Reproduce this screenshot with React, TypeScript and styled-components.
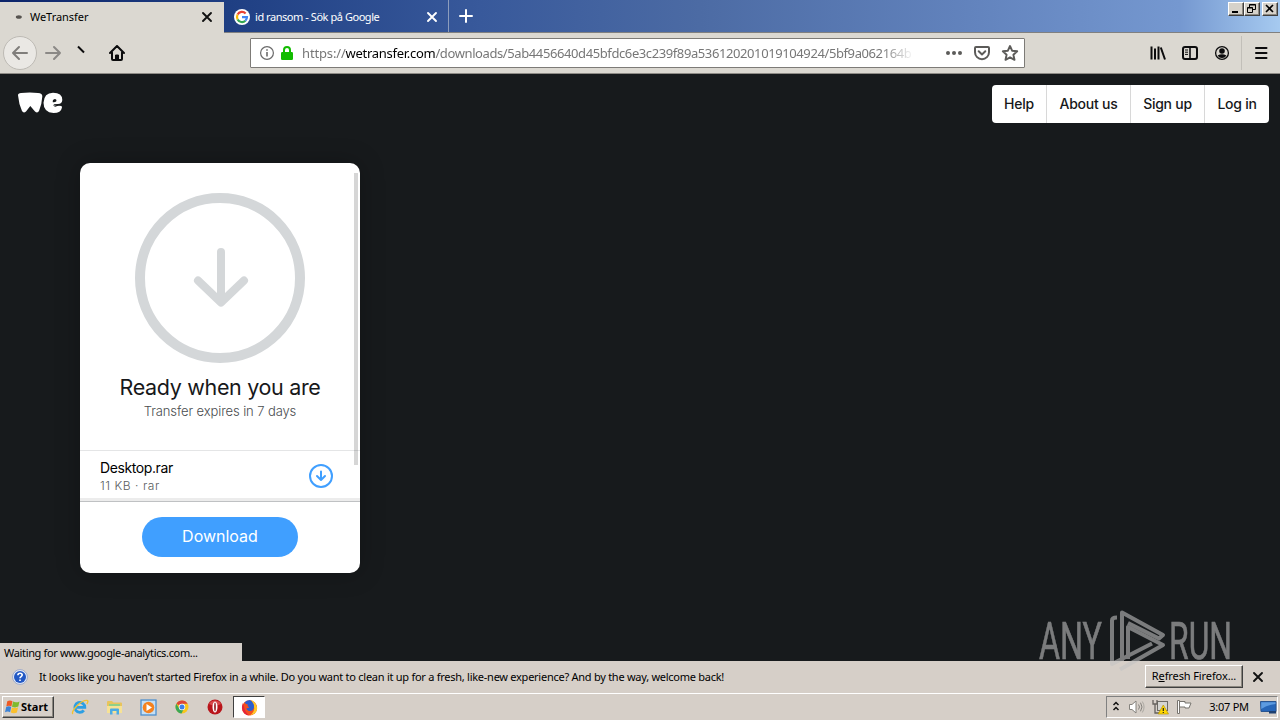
import React from 'react'

import styled, { createGlobalStyle } from 'styled-components'

const GlobalStyle = createGlobalStyle`
  * {
    box-sizing: border-box;
  }

  body {
    margin: 0;
    overflow: hidden;
    background: #171a1c;
    font-family: 'Noto Sans', 'Open Sans', sans-serif;
    color: #000;
  }

  svg {
    display: block;
    flex: none;
  }
`

const Screen = styled.div`
  position: relative;
  display: flex;
  flex-direction: column;
  width: 1280px;
  height: 720px;
  overflow: hidden;
`

/* ---------- browser chrome ---------- */

const TitleBar = styled.div`
  display: flex;
  flex: none;
  height: 33px;
  background: linear-gradient(
    90deg,
    #0c246a 0,
    #1f3f83 230px,
    #38599b 480px,
    #4c6ba4 700px,
    #6384be 980px,
    #7598d0 1180px,
    #a6caf0 1280px
  );
  border-bottom: 1px solid #808080;
`

const Tab = styled.div<{ $active?: boolean }>`
  display: flex;
  align-items: center;
  width: ${({ $active }) => ($active ? 224 : 225)}px;
  height: ${({ $active }) => ($active ? 31 : 32)}px;
  margin-top: ${({ $active }) => ($active ? 2 : 0)}px;
  padding: ${({ $active }) => ($active ? '0 10px 2px 11px' : '1px 9px 0 10px')};
  background: ${({ $active }) => ($active ? '#dbd8d1' : 'transparent')};
  border-right: ${({ $active }) => ($active ? 'none' : '1px solid #8d9dbd')};
  color: ${({ $active }) => ($active ? '#000' : '#fff')};
`

const TabLabel = styled.span<{ $gap: number; $spacing: string }>`
  flex: 1;
  margin-left: ${({ $gap }) => $gap}px;
  font-size: 11px;
  letter-spacing: ${({ $spacing }) => $spacing};
  white-space: nowrap;
`

const NewTab = styled.div`
  display: flex;
  align-items: center;
  margin-left: 9px;
`

const WindowControls = styled.div`
  display: flex;
  margin: 2px 2px 0 auto;
`

const WindowButton = styled.div<{ $spaced?: boolean }>`
  display: flex;
  width: 16px;
  height: 14px;
  margin-left: ${({ $spaced }) => ($spaced ? 2 : 0)}px;
  background: #d6d2ca;
  border: 1px solid;
  border-color: #fff #404040 #404040 #fff;
  box-shadow: inset -1px -1px 0 #8c8880;
`

const Toolbar = styled.div`
  display: flex;
  flex: none;
  align-items: center;
  height: 41px;
  padding: 0 11px 1px 3px;
  background: #dbd8d1;
  border-bottom: 1px solid #8e8b86;
`

const BackButton = styled.div`
  display: flex;
  align-items: center;
  justify-content: center;
  width: 34px;
  height: 34px;
  background: #eae8e4;
  border: 1px solid #bdbab4;
  border-radius: 50%;
`

const NavIcons = styled.div`
  display: flex;
  align-items: center;
  gap: 14px;
  margin-left: 7px;
`

const AddressBar = styled.div`
  display: flex;
  align-items: center;
  width: 775px;
  height: 30px;
  margin-left: 125px;
  padding: 0 5px 0 8px;
  background: #fff;
  border: 1px solid #7d7b77;
  border-radius: 1px;
`

const Identity = styled.div`
  display: flex;
  align-items: center;
  gap: 5px;
`

const Url = styled.div`
  flex: 1;
  margin-left: 8px;
  font-size: 13px;
  line-height: 26px;
  letter-spacing: -0.4px;
  color: #777;
  white-space: nowrap;
  mask-image: linear-gradient(90deg, #000 580px, transparent 612px);
`

const Scheme = styled.span`
  letter-spacing: -0.15px;
`

const Host = styled.span`
  color: #000;
  letter-spacing: -0.28px;
`

const AddressActions = styled.div`
  display: flex;
  align-items: center;
  gap: 10px;
  margin-left: 34px;
`

const ToolbarActions = styled.div`
  display: flex;
  align-items: center;
  gap: 16px;
  margin-left: auto;
`

const MenuCell = styled.div`
  display: flex;
  align-items: center;
  height: 34px;
  margin-left: -5px;
  padding-left: 11px;
  border-left: 1px solid #c2bfb9;
`

/* ---------- page ---------- */

const Page = styled.main`
  display: flex;
  flex: 1;
  flex-direction: column;
  min-height: 0;
  background: #171a1c;
  font-family: Inter, 'Liberation Sans', sans-serif;
`

const PageHeader = styled.header`
  display: flex;
  flex: none;
  justify-content: space-between;
  height: 49px;
  padding: 11px 11px 0 18px;
`

const Logo = styled.svg`
  margin-top: 7px;
`

const PageNav = styled.nav`
  display: flex;
  height: 38px;
  background: #fff;
  border-radius: 4px;
`

const NavItem = styled.a<{ $width: number }>`
  width: ${({ $width }) => $width}px;
  font-size: 14px;
  font-weight: 500;
  line-height: 38px;
  letter-spacing: -0.25px;
  text-align: center;
  color: #17181a;

  & + & {
    border-left: 1px solid #d8d8d8;
  }
`

const Card = styled.section`
  display: flex;
  flex: none;
  flex-direction: column;
  position: relative;
  width: 280px;
  height: 410px;
  margin: 40px 0 0 80px;
  overflow: hidden;
  background: #fff;
  border-radius: 10px;
  box-shadow: 0 0 24px rgba(0, 0, 0, 0.25);
`

const Hero = styled.div`
  display: flex;
  flex-direction: column;
  align-items: center;
  height: 288px;
  padding-top: 30px;
  border-bottom: 1px solid #e4e5e6;
`

const Title = styled.h2`
  margin: 10px 0 0;
  font-size: 21.5px;
  font-weight: 400;
  line-height: 28px;
  letter-spacing: -0.33px;
  color: #17181a;
`

const Subtitle = styled.p`
  margin: 0;
  font-size: 13px;
  font-weight: 300;
  line-height: 20px;
  letter-spacing: -0.1px;
  color: #4a4d4f;
`

const FileRow = styled.div`
  display: flex;
  align-items: center;
  justify-content: space-between;
  height: 51px;
  padding: 0 27px 0 20px;
  border-bottom: 1px solid #bfc1c3;
  box-shadow: inset 0 -3px 0 #ececec;
`

const FileName = styled.div`
  font-size: 14px;
  line-height: 18px;
  letter-spacing: -0.4px;
`

const FileMeta = styled.div`
  font-size: 12px;
  font-weight: 300;
  line-height: 17px;
  letter-spacing: 0.55px;
  color: #5a5d60;
`

const CardFooter = styled.div`
  display: flex;
  justify-content: center;
  padding-top: 15px;
`

const DownloadButton = styled.button`
  width: 156px;
  height: 40px;
  padding: 0 0 2px;
  background: #409fff;
  border: 0;
  border-radius: 20px;
  font-family: inherit;
  font-size: 16px;
  color: #fff;
`

const ScrollThumb = styled.div`
  position: absolute;
  top: 10px;
  right: 2px;
  width: 4px;
  height: 292px;
  background: rgba(0, 0, 0, 0.16);
`

const StatusText = styled.div`
  width: 242px;
  height: 18px;
  margin-top: auto;
  padding-left: 4px;
  background: #d5cfc9;
  font-family: 'Noto Sans', sans-serif;
  font-size: 11px;
  line-height: 20px;
  letter-spacing: -0.34px;
  white-space: nowrap;
`

/* ---------- notification and taskbar ---------- */

const Notification = styled.div`
  display: flex;
  flex: none;
  align-items: center;
  height: 32px;
  padding: 0 15px 1px 12px;
  background: #d6cfc8;
  font-size: 11px;
`

const Message = styled.span`
  flex: 1;
  margin-left: 11px;
  letter-spacing: -0.26px;
  white-space: nowrap;
`

const RefreshButton = styled.div`
  width: 98px;
  height: 23px;
  margin-right: 8px;
  border: 1px solid;
  border-color: #fff #404040 #404040 #fff;
  box-shadow: inset -1px -1px 0 #8c8880;
  line-height: 20px;
  text-align: center;
  letter-spacing: -0.1px;
`

const Taskbar = styled.div`
  display: flex;
  flex: none;
  align-items: center;
  height: 27px;
  padding: 0 2px;
  background: #d6cfc8;
  border-top: 1px solid #fff;
`

const StartButton = styled.div`
  display: flex;
  align-items: center;
  gap: 1px;
  width: 52px;
  height: 22px;
  padding: 0 0 1px 2px;
  border: 1px solid;
  border-color: #fff #404040 #404040 #fff;
  box-shadow: inset -1px -1px 0 #8c8880;
  font-size: 11px;
  font-weight: 700;
`

const QuickLaunch = styled.div`
  display: flex;
  align-items: center;
  gap: 17px;
  margin-left: 17px;
`

const RunningApp = styled.div`
  display: flex;
  align-items: center;
  justify-content: center;
  width: 32px;
  height: 22px;
  margin-left: 10px;
  background: #fff;
  border: 1px solid;
  border-color: #404040 #fff #fff #404040;
`

const Tray = styled.div`
  display: flex;
  align-items: center;
  width: 172px;
  height: 22px;
  margin-left: auto;
  padding-left: 5px;
  border: 1px solid;
  border-color: #808080 #fff #fff #808080;
  font-size: 11px;
`

const TrayIcons = styled.div`
  display: flex;
  align-items: center;
  gap: 7px;
`

const Clock = styled.span`
  flex: 1;
  text-align: center;
  padding: 0 0 1px 6px;
  letter-spacing: -0.25px;
  white-space: nowrap;
`

const Watermark = styled.svg`
  position: absolute;
  left: 1036px;
  top: 604px;
  overflow: visible;
  pointer-events: none;
`

/* ---------- icons ---------- */

const CloseIcon: React.FC<{ color?: string }> = ({ color = '#111' }) => (
  <svg width="14" height="14" viewBox="0 0 14 14" stroke={color} strokeWidth="1.9" strokeLinecap="round">
    <path d="M3 3l8 8M11 3l-8 8" />
  </svg>
)

const GoogleIcon = () => (
  <svg width="16" height="16" viewBox="0 0 16 16" fill="none" strokeWidth="2.2">
    <circle cx="8" cy="8" r="8" fill="#fff" />
    <path d="M11.6 4.4A5 5 0 0 0 3.6 5.6" stroke="#ea4335" />
    <path d="M3.6 5.6A5 5 0 0 0 3.6 10.4" stroke="#fbbc05" />
    <path d="M3.6 10.4A5 5 0 0 0 11.4 11.7" stroke="#34a853" />
    <path d="M8 8.1h5A5 5 0 0 1 11.4 11.7" stroke="#4285f4" />
  </svg>
)

const ArrowIcon: React.FC<{ flip?: boolean }> = ({ flip }) => (
  <svg
    width="18"
    height="16"
    viewBox="0 0 18 16"
    fill="none"
    stroke={flip ? '#8b8986' : '#807e7b'}
    strokeWidth="2"
    strokeLinecap="round"
    strokeLinejoin="round"
  >
    <path d={flip ? 'M2 8h14M10 2l6 6-6 6' : 'M16 8H2M8 2L2 8l6 6'} />
  </svg>
)

const HomeIcon = () => (
  <svg width="16" height="16" viewBox="0 0 16 16" fill="none" stroke="#0c0c0d" strokeWidth="2" strokeLinecap="round" strokeLinejoin="round">
    <path d="M1 8l7-7 7 7M3 7.5V14q0 1 1 1h8q1 0 1-1V7.5" />
    <path d="M6.5 14v-4h3v4z" fill="#0c0c0d" strokeWidth="1" />
  </svg>
)

const InfoIcon = () => (
  <svg width="16" height="16" viewBox="0 0 16 16" fill="none" stroke="#6b6b6b">
    <circle cx="8" cy="8" r="6.4" strokeWidth="1.2" />
    <path d="M8 7v4.5M8 4.2v1.6" strokeWidth="1.6" />
  </svg>
)

const LockIcon = () => (
  <svg width="14" height="16" viewBox="0 0 14 16">
    <path d="M4 8V5a3 3 0 0 1 6 0v3" fill="none" stroke="#12bc00" strokeWidth="2" />
    <rect x="1" y="7" width="12" height="8" rx="1.2" fill="#12bc00" />
  </svg>
)

const PageActionIcons = () => (
  <>
    <svg width="18" height="16" viewBox="0 0 18 16" fill="#5c5b59">
      <circle cx="3" cy="8" r="2" />
      <circle cx="9" cy="8" r="2" />
      <circle cx="15" cy="8" r="2" />
    </svg>
    <svg width="18" height="16" viewBox="0 0 18 16" fill="none" stroke="#5c5b59" strokeWidth="2" strokeLinecap="round" strokeLinejoin="round">
      <path d="M3 2h12q1 0 1 1v4.2a7 7 0 0 1-14 0V3q0-1 1-1z" />
      <path d="M5.7 6.3L9 9.4l3.3-3.1" />
    </svg>
    <svg width="18" height="18" viewBox="0 0 18 18" fill="none" stroke="#5c5b59" strokeWidth="1.9" strokeLinejoin="round">
      <path d="M9 2l2.1 4.7 5.1.6-3.8 3.4 1.1 5.1L9 13.3l-4.5 2.5 1.1-5.1-3.8-3.4 5.1-.6z" />
    </svg>
  </>
)

const LibraryIcon = () => (
  <svg width="16" height="16" viewBox="0 0 16 16" stroke="#0c0c0d" strokeWidth="2">
    <path d="M1.5 1.5v13M5 3.500v11M8.500 1.500v13M10.800 2.500l4.200 12" />
  </svg>
)

const SidebarIcon = () => (
  <svg width="16" height="16" viewBox="0 0 16 16" fill="none" stroke="#0c0c0d">
    <rect x="1" y="2" width="14" height="12" rx="2" strokeWidth="2" />
    <path d="M8 2v12" strokeWidth="1.6" />
    <path d="M3 5h3M3 7.2h3M3 9.4h3" strokeWidth="1" />
  </svg>
)

const AccountIcon = () => (
  <svg width="16" height="16" viewBox="0 0 16 16">
    <circle cx="8" cy="8" r="6.4" fill="none" stroke="#0c0c0d" strokeWidth="1.3" />
    <circle cx="8" cy="6" r="2.8" fill="#0c0c0d" />
    <path d="M3.6 10.4Q8 8.2 12.4 10.4 11 13 8 13T3.6 10.4z" fill="#0c0c0d" />
  </svg>
)

const MenuIcon = () => (
  <svg width="16" height="16" viewBox="0 0 16 16" stroke="#0c0c0d" strokeWidth="2" strokeLinecap="round">
    <path d="M3 3h10.500M3 8h10.500M3 13h10.500" />
  </svg>
)

const HelpBadge = () => (
  <svg width="16" height="16" viewBox="0 0 16 16">
    <circle cx="8" cy="8" r="7.4" fill="#e8edf7" stroke="#8b9cc4" strokeWidth=".8" />
    <circle cx="8" cy="8" r="6" fill="#2258c4" />
    <path d="M5.900 6.300c0-2.800 4.300-2.600 4.300-.2C10.200 7.500 8 7.600 8 9.200M8 10.600v1.500" fill="none" stroke="#fff" strokeWidth="1.6" />
  </svg>
)

const WindowsFlag = () => (
  <svg width="15" height="16" viewBox="0 0 15 16">
    <path d="M2.300 2.200Q5 .6 7.500 2.200L6.400 7.400Q4 6 1.300 7.400z" fill="#ee5a24" />
    <path d="M8.100 2.600Q11 4.200 14.500 2.400L13.300 7.600Q10.300 9.200 7 7.700z" fill="#7fba2c" />
    <path d="M1.200 8Q3.800 6.600 6.200 8L5.100 13.200Q2.800 11.800 0 13.200z" fill="#3b82d6" />
    <path d="M6.900 8.400Q10 9.900 13.100 8.200L11.900 13.500Q9 15 5.800 13.600z" fill="#fbc02d" />
  </svg>
)

const ExplorerE = () => (
  <svg width="18" height="18" viewBox="0 0 18 18" fill="none">
    <path d="M5 9.400h8.800a5 5 0 1 0-1 3" stroke="#2d9fe3" strokeWidth="2.800" />
    <path d="M1.800 16c-2-3 8-14 14.300-13.600 1.300.3.800 2-.3 3.600" stroke="#f2c230" strokeWidth="1.400" />
  </svg>
)

const FolderIcon = () => (
  <svg width="17" height="16" viewBox="0 0 17 16">
    <path d="M1 3q0-1 1-1h4l1.500 1.500H15q1 0 1 1V14H1z" fill="#e8c45c" />
    <path d="M3 5h11v3H3z" fill="#8fd08a" />
    <path d="M1 7h15v7H1z" fill="#f7e294" />
    <path d="M4 15.500V10.500q0-1 1-1h7q1 0 1 1v5h-2.500v-3.500h-4v3.500z" fill="#4dabe3" />
  </svg>
)

const MediaIcon = () => (
  <svg width="17" height="17" viewBox="0 0 17 17">
    <rect x="1" y="1" width="15" height="15" fill="#c5dff4" stroke="#4e90cd" strokeWidth="1.300" />
    <circle cx="8.500" cy="8.500" r="5.800" fill="#f5821f" />
    <path d="M6.500 5l5.500 3.500L6.500 12z" fill="#fff" />
  </svg>
)

const ChromeIcon = () => (
  <svg width="16" height="16" viewBox="0 0 16 16">
    <circle cx="8" cy="8" r="6.500" fill="#f8c61c" />
    <path d="M8 8L2.400 4.700A6.500 6.500 0 0 1 13.700 4.800H8z" fill="#dd4438" />
    <path d="M2.400 4.700A6.500 6.500 0 0 0 7.500 14.500L10 9.500 5.200 9.500z" fill="#3ba757" />
    <circle cx="8" cy="8" r="3.200" fill="#fff" />
    <circle cx="8" cy="8" r="2.500" fill="#3e7fe8" />
  </svg>
)

const OperaIcon = () => (
  <svg width="16" height="16" viewBox="0 0 16 16">
    <circle cx="8" cy="8" r="7.500" fill="#b9151b" />
    <path d="M2 5a7 7 0 0 1 12 0Q8 8 2 5z" fill="#d84a4c" />
    <ellipse cx="8" cy="8" rx="2.500" ry="5.600" fill="#fff" />
    <ellipse cx="8" cy="8" rx=".8" ry="4.400" fill="#8b1014" />
  </svg>
)

const FirefoxIcon = () => (
  <svg width="17" height="17" viewBox="0 0 17 17">
    <circle cx="8.500" cy="8.800" r="7.600" fill="#f4501f" />
    <path d="M9.500.8Q15.500 3 16.200 9 15.800 15.500 9 16.400 13.500 13 13.200 9 13 5 9.500.8z" fill="#ffc928" />
    <path d="M3.500 3.500Q5.500 1 9 1 13.500 4 13 8.500 12 12 8.800 12 5.500 11.500 5.500 9.200 7 9.500 8.300 8.200 6 7.500 6.800 5.500 5 5.300 3.500 3.500z" fill="#2b5fd0" />
    <path d="M1.800 4Q.3 8 1.500 11.500 3.500 16 8 16.400 3.500 12.500 3 7.500z" fill="#e5253b" />
  </svg>
)

const TraySymbols = () => (
  <TrayIcons>
    <svg width="8" height="12" viewBox="0 0 8 12" fill="none" stroke="#111" strokeWidth="1.500">
      <path d="M1.500 4L4 1.500 6.500 4M1.500 9L4 6.500 6.500 9" />
    </svg>
    <svg width="18" height="16" viewBox="0 0 18 16" fill="none" stroke="#85827d">
      <path d="M2.500 5.500H5L9 2v12L5 10.500H2.500z" fill="#fff" />
      <path d="M11.500 5.500q2 2.500 0 5M13.500 3.700q3 4.300 0 8.600" />
      <path d="M15.300 2.500q3.500 5.500 0 11" stroke="#aaa7a1" />
    </svg>
    <svg width="17" height="16" viewBox="0 0 17 16" fill="none">
      <rect x="5.500" y="2.500" width="10" height="9" fill="#d5d5d2" stroke="#6c6a66" />
      <path d="M1 1v4h4V1M3 5v9h5" stroke="#65625e" strokeWidth="1.300" />
      <path d="M11.300 6L16.500 15H6.200z" fill="#ffd800" stroke="#b99700" strokeWidth=".7" />
      <path d="M11.300 9v3M11.300 13v1" stroke="#222" strokeWidth="1.200" />
    </svg>
    <svg width="16" height="16" viewBox="0 0 16 16" fill="#fff" stroke="#77746f">
      <path d="M1.500 1.500h2v13h-2zM3.500 2.500h5.500v1.500h6l-2 5H9V8H3.500z" />
    </svg>
  </TrayIcons>
)

const MonitorIcon = () => (
  <svg width="17" height="15" viewBox="0 0 17 15">
    <path d="M.5 1.500h15.500v10H1z" fill="#2766b8" stroke="#2a5590" />
    <path d="M1.200 2.200H15.500V4Q7 5 1.200 9z" fill="#5d9be0" />
    <path d="M9 11h7v2.500H9z" fill="#1d3f70" />
  </svg>
)

const links = [
  { label: 'Help', width: 54 },
  { label: 'About us', width: 84 },
  { label: 'Sign up', width: 74 },
  { label: 'Log in', width: 65 },
]

const App: React.FC = () => {
  return (
    <Screen>
      <GlobalStyle />
      <TitleBar>
        <Tab $active>
          <svg width="16" height="16" viewBox="0 0 16 16">
            <ellipse cx="7.800" cy="8" rx="3" ry="1.800" fill="#56534f" />
          </svg>
          <TabLabel $gap={3} $spacing="-0.05px">
            WeTransfer
          </TabLabel>
          <CloseIcon />
        </Tab>
        <Tab>
          <GoogleIcon />
          <TabLabel $gap={5} $spacing="-0.45px">
            id ransom - Sök på Google
          </TabLabel>
          <CloseIcon color="#fff" />
        </Tab>
        <NewTab>
          <svg width="16" height="16" viewBox="0 0 16 16" stroke="#fff" strokeWidth="2" strokeLinecap="round">
            <path d="M8 2v12M2 8h12" />
          </svg>
        </NewTab>
        <WindowControls>
          <WindowButton>
            <svg width="14" height="12" viewBox="0 0 14 12">
              <path d="M3 8h6v2H3z" />
            </svg>
          </WindowButton>
          <WindowButton>
            <svg width="14" height="12" viewBox="0 0 14 12" fill="none" stroke="#000">
              <path d="M4.500 4V1.500h6v5H8M4.500 2h6M2.500 4.500h5v5h-5zM2.500 5h5" />
            </svg>
          </WindowButton>
          <WindowButton $spaced>
            <svg width="14" height="12" viewBox="0 0 14 12" stroke="#000" strokeWidth="1.600">
              <path d="M3 2l7 7M10 2L3 9" />
            </svg>
          </WindowButton>
        </WindowControls>
      </TitleBar>

      <Toolbar>
        <BackButton>
          <ArrowIcon />
        </BackButton>
        <NavIcons>
          <ArrowIcon flip />
          {/* throbber frame of the stop/reload button */}
          <svg width="19" height="16" viewBox="0 0 19 16" stroke="#0c0c0d" strokeWidth="2">
            <path d="M2 1.500l6 6" />
          </svg>
          <HomeIcon />
        </NavIcons>
        <AddressBar>
          <Identity>
            <InfoIcon />
            <LockIcon />
          </Identity>
          <Url>
            <Scheme>https://</Scheme>
            <Host>wetransfer.com</Host>
            /downloads/5ab4456640d45bfdc6e3c239f89a536120201019104924/5bf9a062164b
          </Url>
          <AddressActions>
            <PageActionIcons />
          </AddressActions>
        </AddressBar>
        <ToolbarActions>
          <LibraryIcon />
          <SidebarIcon />
          <AccountIcon />
          <MenuCell>
            <MenuIcon />
          </MenuCell>
        </ToolbarActions>
      </Toolbar>

      <Page>
        <PageHeader>
          <Logo width="45" height="22" viewBox="0 0 45 22">
            <path
              d="M0 3.200Q0 1.200 3 1Q12 .2 20 1Q24.500 1.200 24.300 4.500Q23.800 13 21 19Q19.500 21.500 17 19.500L12.300 14 8 19.500Q5.500 21.500 4 19Q.800 12 0 3.200z"
              fill="#fff"
            />
            <path
              d="M35 .8Q44.300.8 44.300 8Q44 12 40 12L35.500 12.300Q37 14.800 40.500 13.800Q44 12.800 44 15.500Q43 21 35.500 21Q25.500 20.500 25.500 10.800Q26 1 35 .8z"
              fill="#fff"
            />
            <path d="M34.800 10.300q-.5-2.800 2-3.300 2.200.3 1.500 2.300-1 1.300-3.500 1zM35 12.700q3 2.200 9 .3l.5 1q-5-.8-6.500.6-2 .4-3-1.900z" fill="#171a1c" />
          </Logo>
          <PageNav>
            {links.map(({ label, width }) => (
              <NavItem key={label} $width={width}>
                {label}
              </NavItem>
            ))}
          </PageNav>
        </PageHeader>

        <Card>
          <Hero>
            <svg width="170" height="170" viewBox="0 0 170 170" fill="none" stroke="#d4d7d9">
              <circle cx="85" cy="85" r="80" strokeWidth="10" />
              <path d="M86 59v50M63 87.500L86 109.500l23-22" strokeWidth="8" strokeLinecap="round" strokeLinejoin="round" />
            </svg>
            <Title>Ready when you are</Title>
            <Subtitle>Transfer expires in 7 days</Subtitle>
          </Hero>
          <FileRow>
            <div>
              <FileName>Desktop.rar</FileName>
              <FileMeta>11 KB · rar</FileMeta>
            </div>
            <svg width="24" height="24" viewBox="0 0 24 24" fill="none" stroke="#409fff" strokeWidth="2" strokeLinecap="round" strokeLinejoin="round">
              <circle cx="12" cy="12" r="11" />
              <path d="M12 7.500v8.500M8 12l4 4 4-4" />
            </svg>
          </FileRow>
          <CardFooter>
            <DownloadButton>Download</DownloadButton>
          </CardFooter>
          <ScrollThumb />
        </Card>

        <StatusText>Waiting for www.google-analytics.com...</StatusText>
      </Page>

      <Notification>
        <HelpBadge />
        <Message>
          It looks like you haven’t started Firefox in a while. Do you want to clean it up for a fresh, like-new
          experience? And by the way, welcome back!
        </Message>
        <RefreshButton>
          R<u>e</u>fresh Firefox...
        </RefreshButton>
        <CloseIcon />
      </Notification>

      <Taskbar>
        <StartButton>
          <WindowsFlag />
          Start
        </StartButton>
        <QuickLaunch>
          <ExplorerE />
          <FolderIcon />
          <MediaIcon />
          <ChromeIcon />
          <OperaIcon />
        </QuickLaunch>
        <RunningApp>
          <FirefoxIcon />
        </RunningApp>
        <Tray>
          <TraySymbols />
          <Clock>3:07 PM</Clock>
          <MonitorIcon />
        </Tray>
      </Taskbar>

      <Watermark width="200" height="76" viewBox="0 0 200 76" opacity=".58">
        <g fill="#c4c4c4" stroke="#c4c4c4" strokeWidth=".6" fontFamily="Roboto, sans-serif" fontSize="52">
          <text x="3" y="55" textLength="63" lengthAdjust="spacingAndGlyphs">
            ANY
          </text>
          <text x="133" y="55" textLength="63" lengthAdjust="spacingAndGlyphs">
            RUN
          </text>
        </g>
        <g fill="none" stroke="#c4c4c4" strokeWidth="4" strokeLinejoin="round">
          <path d="M81 13.500q-5 0-5 3V60l40-20.500" />
          <path d="M86 57V8.500L127 31l-4 3.500L92 19" />
          <path d="M84 65.500L127 41 92 23v32" />
        </g>
      </Watermark>
    </Screen>
  )
}

export default App
